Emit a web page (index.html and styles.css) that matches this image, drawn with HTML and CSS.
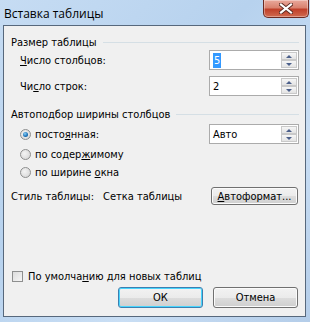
FILE: index.html
```html
<!DOCTYPE html>
<html lang="ru">
<head>
    <meta charset="UTF-8">
    <title>Вставка таблицы</title>
    <link rel="stylesheet" href="styles.css">
</head>
<body>
    <div class="window">
        <div class="titlebar">
            <span class="title">Вставка таблицы</span>
            <div class="close-btn">
                <svg width="14" height="11" viewBox="0 0 14 11">
                    <path d="M2 1.5 L12 9.5 M12 1.5 L2 9.5" stroke="#5a2a22" stroke-width="4" stroke-linecap="square"/>
                    <path d="M2 1.5 L12 9.5 M12 1.5 L2 9.5" stroke="#ffffff" stroke-width="2.2" stroke-linecap="square"/>
                </svg>
            </div>
        </div>

        <div class="client">
            <div class="group-title"><span>Размер таблицы</span><div class="rule"></div></div>

            <div class="row row-cols">
                <span class="label indent"><u>Ч</u>исло столбцов:</span>
                <div class="spin">
                    <div class="spin-value"><span class="selected">5</span></div>
                    <div class="spin-btns">
                        <div class="spin-btn"><i class="arrow up"></i></div>
                        <div class="spin-btn"><i class="arrow down"></i></div>
                    </div>
                </div>
            </div>

            <div class="row row-rows">
                <span class="label indent">Чи<u>с</u>ло строк:</span>
                <div class="spin">
                    <div class="spin-value">2</div>
                    <div class="spin-btns">
                        <div class="spin-btn"><i class="arrow up"></i></div>
                        <div class="spin-btn"><i class="arrow down"></i></div>
                    </div>
                </div>
            </div>

            <div class="group-title second"><span>Автоподбор ширины столбцов</span><div class="rule"></div></div>

            <div class="row row-radio1">
                <label class="radio-item indent"><span class="radio checked"></span><span>посто<u>я</u>нная:</span></label>
                <div class="spin">
                    <div class="spin-value">Авто</div>
                    <div class="spin-btns">
                        <div class="spin-btn"><i class="arrow up"></i></div>
                        <div class="spin-btn"><i class="arrow down"></i></div>
                    </div>
                </div>
            </div>
            <label class="radio-item indent radio2"><span class="radio"></span><span>по содер<u>ж</u>имому</span></label>
            <label class="radio-item indent radio3"><span class="radio"></span><span>по ширине <u>о</u>кна</span></label>

            <div class="row row-style">
                <span class="label">Стиль таблицы:</span>
                <span class="label style-name">Сетка таблицы</span>
                <button class="btn btn-auto"><u>А</u>втоформат...</button>
            </div>

            <label class="check-item"><span class="checkbox"></span><span>По умолча<u>н</u>ию для новых таблиц</span></label>

            <div class="actions">
                <button class="btn btn-default">ОК</button>
                <button class="btn">Отмена</button>
            </div>
        </div>
    </div>
</body>
</html>
```

FILE: styles.css
```css
body {
    margin: 0;
    width: 310px;
    height: 322px;
    overflow: hidden;
    font-family: "DejaVu Sans Condensed", "DejaVu Sans", sans-serif;
    font-size: 11px;
    color: #000;
}

.window {
    width: 310px;
    height: 322px;
    box-sizing: border-box;
    background: linear-gradient(135deg, #c6dcf3 0%, #b7d2ee 40%, #c9def4 70%, #b4cde9 100%);
    padding: 0 4px 5px 3px;
    display: flex;
    flex-direction: column;
}

.titlebar {
    height: 25px;
    display: flex;
    align-items: flex-start;
    justify-content: space-between;
}

.title {
    font-family: "Open Sans", "Noto Sans", sans-serif;
    font-size: 12px;
    margin: 5px 0 0 1px;
    color: #000;
}

.close-btn {
    width: 46px;
    height: 18px;
    margin-right: -3px;
    box-sizing: border-box;
    border: 1px solid #6b2a22;
    border-top: none;
    border-radius: 0 0 5px 5px;
    background: linear-gradient(#e9a99c 0%, #d9826f 45%, #c0402a 55%, #d06a50 100%);
    display: flex;
    align-items: center;
    justify-content: center;
    box-shadow: inset 0 0 0 1px rgba(255, 255, 255, 0.35);
}

.client {
    flex: 1;
    background: #f0f0f0;
    border: 1px solid #57687c;
    padding: 0 6px 0 7px;
    display: flex;
    flex-direction: column;
}

.group-title {
    display: flex;
    align-items: center;
    height: 14px;
    margin-top: 9px;
}

.group-title.second {
    margin-top: 11px;
}

.rule {
    flex: 1;
    height: 1px;
    background: #d5dfe5;
    margin-left: 6px;
}

.row {
    display: flex;
    align-items: center;
    justify-content: space-between;
}

.row-cols {
    margin-top: 1px;
}

.row-rows {
    margin-top: 6px;
}

.row-radio1 {
    margin-top: 3px;
}

.indent {
    margin-left: 9px;
}

.spin {
    width: 90px;
    height: 20px;
    box-sizing: border-box;
    border: 1px solid #ababab;
    background: #fff;
    display: flex;
    align-items: center;
    justify-content: space-between;
    padding: 0 1px 0 3px;
}

.spin-value {
    font-size: 11px;
}

.selected {
    background: #3399ff;
    color: #fff;
    padding: 1px 1px;
}

.spin-btns {
    display: flex;
    flex-direction: column;
}

.spin-btn {
    width: 16px;
    height: 8px;
    box-sizing: border-box;
    border: 1px solid #c9c9c9;
    background: linear-gradient(#f6f6f6, #e3e3e3);
    display: flex;
    align-items: center;
    justify-content: center;
}

.arrow {
    width: 0;
    height: 0;
    border-left: 3px solid transparent;
    border-right: 3px solid transparent;
}

.arrow.up {
    border-bottom: 3px solid #4b5f8a;
}

.arrow.down {
    border-top: 3px solid #4b5f8a;
}

.radio-item {
    display: flex;
    align-items: center;
    gap: 4px;
    height: 14px;
}

.radio2 {
    margin-top: 3px;
}

.radio3 {
    margin-top: 4px;
}

.radio {
    width: 11px;
    height: 11px;
    box-sizing: border-box;
    border-radius: 50%;
    border: 1px solid #8e8f8f;
    background: radial-gradient(circle at 40% 40%, #f4f4f4 0%, #dcdcdc 70%, #cfcfcf 100%);
    display: flex;
    align-items: center;
    justify-content: center;
}

.radio.checked::after {
    content: "";
    width: 5px;
    height: 5px;
    border-radius: 50%;
    background: radial-gradient(circle at 40% 35%, #8ad0f7 0%, #1a6fb5 60%, #0b4f8d 100%);
}

.row-style {
    margin-top: 8px;
    justify-content: flex-start;
}

.style-name {
    margin-left: 9px;
}

.btn {
    font-family: inherit;
    font-size: 11px;
    height: 20px;
    width: 86px;
    box-sizing: border-box;
    border: 1px solid #707070;
    border-radius: 3px;
    background: linear-gradient(#f2f2f2 0%, #ebebeb 50%, #dddddd 51%, #cfcfcf 100%);
    box-shadow: inset 0 0 0 1px #fbfbfb;
    padding: 0;
    color: #000;
}

.btn-auto {
    margin-left: auto;
    margin-right: 1px;
    width: 87px;
    height: 18px;
}

.btn-default {
    border-color: #3c7fb1;
    box-shadow: inset 0 0 0 1px #48d5fd;
}

.check-item {
    display: flex;
    align-items: center;
    gap: 5px;
    margin-top: 65px;
}

.checkbox {
    width: 11px;
    height: 11px;
    box-sizing: border-box;
    border: 1px solid #8e8f8f;
    background: linear-gradient(135deg, #dcdcdc, #f6f6f6);
    margin-left: 1px;
}

.actions {
    display: flex;
    justify-content: flex-end;
    gap: 10px;
    margin-top: 4px;
    margin-right: 1px;
}

.actions .btn {
    width: 85px;
    height: 21px;
}
```
